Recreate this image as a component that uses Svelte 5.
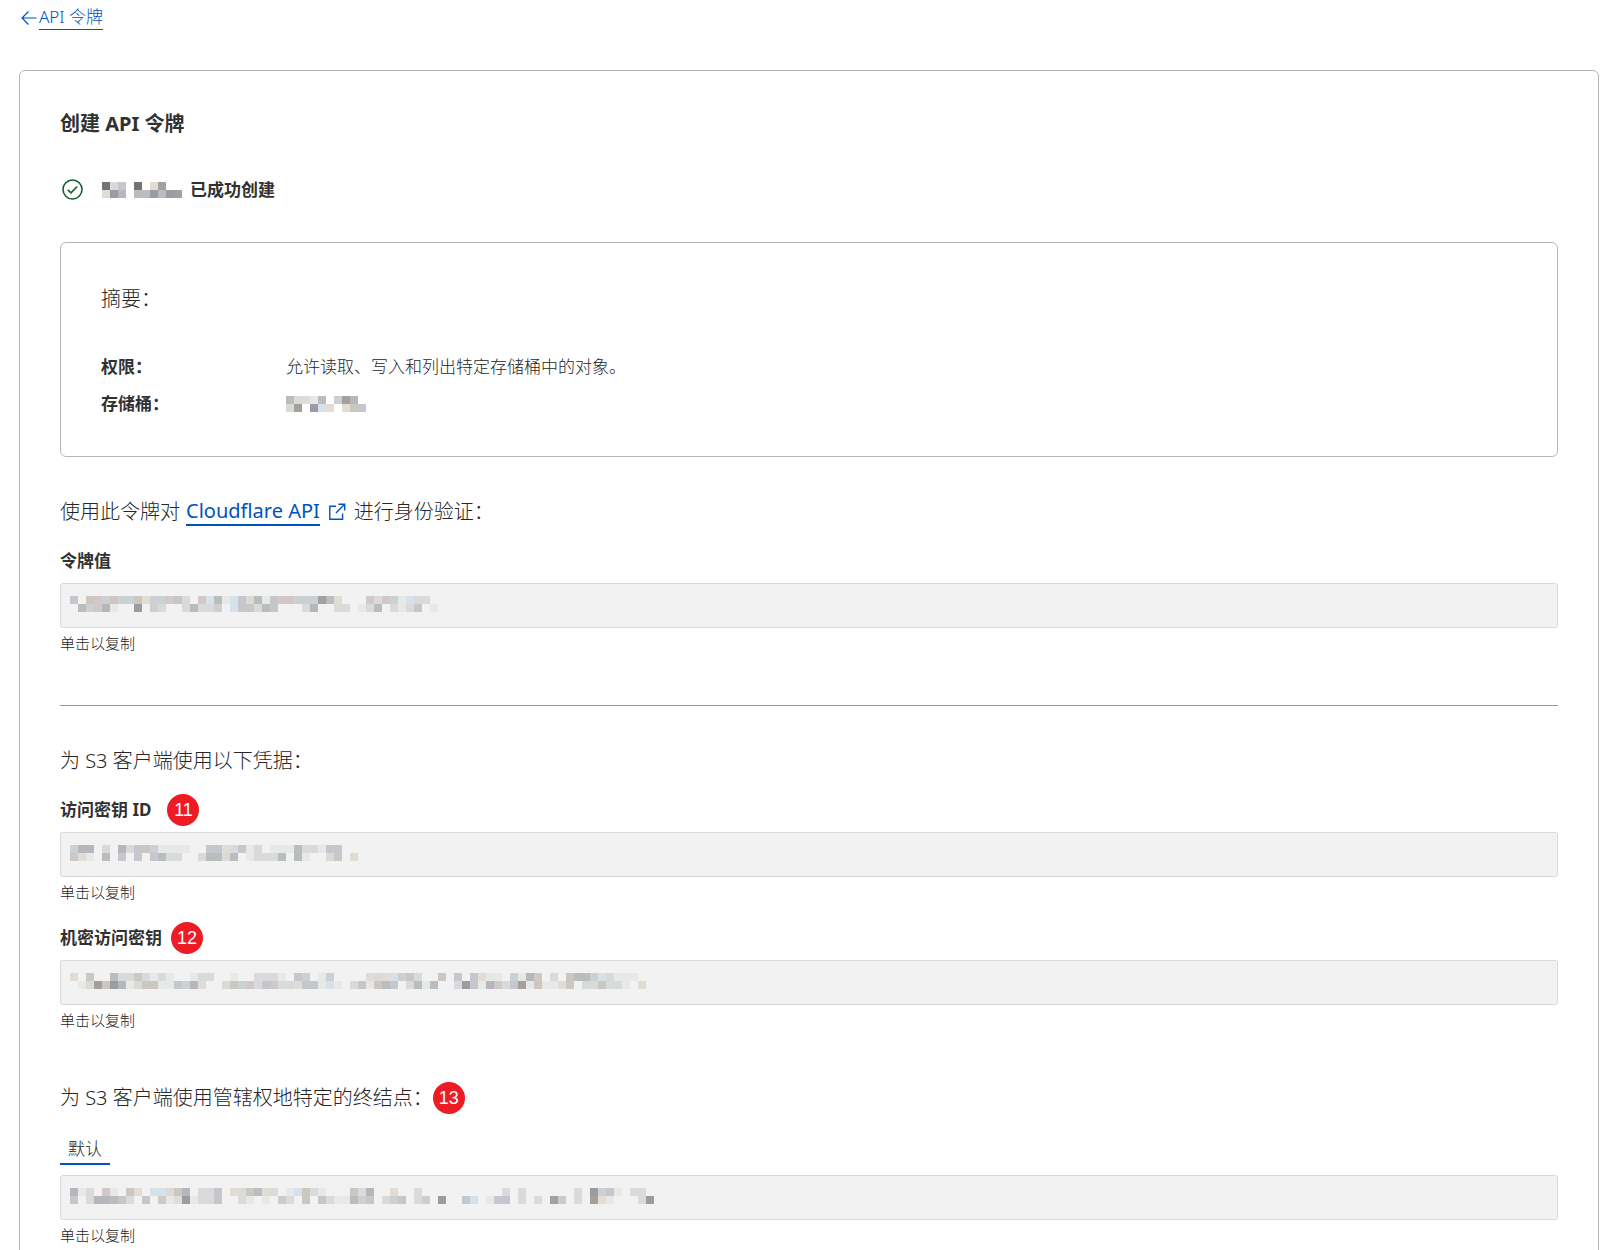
<script lang="ts">
	// shades used by the redaction mosaics
	const shades: Record<string, string> = {
		k: '#757175',
		n: '#a5a09c',
		d: '#999da3',
		q: '#b8b6bd',
		g: '#babdbe',
		m: '#ccc7c0',
		p: '#c5c6ce',
		r: '#d3c8c8',
		t: '#cbd1d2',
		l: '#d9dada',
		w: '#e3dcd5',
		b: '#d7e1e9',
		v: '#e7e8e8'
	};

	const nameMask = ['klp.k.wn...', 'wdq.ggdgdn.'];
	const bucketMask = ['glwvg.tnq.', 'ln.dbw.wmp'];

	const token = {
		id: 'token-value',
		label: '令牌值',
		mask: [
			'p.mrtmttmwttrpl.rbgvbplgvprrtttngw...rlrtvbll.',
			'.gtrqv..d.tl..lgllt.bpmlgp...lq..ll.vlg.lvlp.v'
		]
	};

	const credentials = [
		{
			id: 'access-key-id',
			label: '访问密钥 ID',
			step: 11,
			wide: true,
			mask: ['tqq.l.qlpmtvvvv..ppwlpvl.vvvgllvpp..', 'mwv.g.p.p.pgll..lgglg.vlllg.gv..lm.w']
		},
		{
			id: 'secret-access-key',
			label: '机密访问密钥',
			step: 12,
			wide: false,
			mask: [
				'w.m..gllmlvlv..vll..v..lllv.pt.vt....wlwbtml..m.p.pwvv.tvqr.l.mggtblvvv.',
				'.vlnmdqvlmmvvptqw..lmtrlprllwppvbv.lpvmgp.lgvg..ldpvqrlpnvmvvwm.llmllv.w'
			]
		}
	];

	const endpointMask = [
		'qvl.rv.mw.bblmq.llp.wlmgwl.vbmlv...mlq..w..l..........l.l......l.dtpv.ll.',
		'p.lqqgpl.p.rvwdvllp..lv.v.rl.m.plvvgtm.ltm.lt.d..pb.vpp.l.l.nr.l.nwv...ld'
	];

	function copy(event: MouseEvent) {
		(event.currentTarget as HTMLInputElement).select();
	}
</script>

<svelte:head>
	<title>创建 API 令牌</title>
</svelte:head>

{#snippet mosaic(rows: string[])}
	<svg class="mosaic" width={rows[0].length * 8} height="16" shape-rendering="crispEdges" aria-hidden="true">
		{#each rows as row, y}
			{#each row as cell, x}
				{#if cell !== '.'}
					<rect x={x * 8} y={y * 8} width="8" height="8" fill={shades[cell]} />
				{/if}
			{/each}
		{/each}
	</svg>
{/snippet}

{#snippet copyBox(id: string, mask: string[], name: string | undefined)}
	<div class="copy-box">
		<input {id} type="text" readonly aria-label={name} aria-describedby="{id}-hint" onclick={copy} />
		{@render mosaic(mask)}
	</div>
	<p class="hint" id="{id}-hint">单击以复制</p>
{/snippet}

<main>
	<nav>
		<svg width="16" height="16" viewBox="0 0 16 16" aria-hidden="true">
			<path d="M15.5 8H1M7.5 1.5 1 8l6.5 6.5" fill="none" stroke="currentColor" stroke-width="1.2" />
		</svg>
		<a href="#tokens">API 令牌</a>
	</nav>

	<section class="card">
		<h1>创建 API 令牌</h1>

		<p class="status">
			<svg width="21" height="21" viewBox="0 0 21 21" fill="none" stroke="#195d2e" aria-hidden="true">
				<circle cx="10.5" cy="10.5" r="9.5" stroke-width="1.6" />
				<path d="m5.8 10.8 3.2 3.1 6.2-6.4" stroke-width="1.7" />
			</svg>
			{@render mosaic(nameMask)}
			<strong>已成功创建</strong>
		</p>

		<div class="summary">
			<h2>摘要：</h2>
			<dl>
				<dt>权限：</dt>
				<dd>允许读取、写入和列出特定存储桶中的对象。</dd>
				<dt>存储桶：</dt>
				<dd>{@render mosaic(bucketMask)}</dd>
			</dl>
		</div>

		<h2 class="intro">
			<span>使用此令牌对</span>
			<a href="#cloudflare-api">Cloudflare API</a>
			<svg width="18" height="18" viewBox="0 0 18 18" fill="none" stroke="#0051c3" stroke-width="1.4" aria-hidden="true">
				<path d="M8 3.2H1.8v13H14.6V10.5M10.5 1.2h6.2v6.2M16.5 1.4 8 9.9" />
			</svg>
			<span>进行身份验证：</span>
		</h2>

		<div class="field">
			<div class="label-row"><label for={token.id}>{token.label}</label></div>
			{@render copyBox(token.id, token.mask, undefined)}
		</div>

		<hr />

		<h2>为 S3 客户端使用以下凭据：</h2>
		{#each credentials as item}
			<div class="field">
				<div class="label-row" class:wide={item.wide}>
					<label for={item.id}>{item.label}</label>
					<span class="badge">{item.step}</span>
				</div>
				{@render copyBox(item.id, item.mask, undefined)}
			</div>
		{/each}

		<div class="endpoint">
			<div class="heading-row">
				<h2>为 S3 客户端使用管辖权地特定的终结点：</h2>
				<span class="badge">13</span>
			</div>
			<div class="tabs" role="tablist">
				<button type="button" role="tab" aria-selected="true">默认</button>
			</div>
			{@render copyBox('endpoint', endpointMask, '默认')}
		</div>
	</section>
</main>

<style>
	:global(body) {
		background: #fff;
		color: #262626;
		font-family: 'Noto Sans', 'Noto Sans CJK SC', sans-serif;
		font-size: 17px;
		font-weight: 300;
		line-height: 25px;
	}
	main { padding: 5px 17px 40px 19px; }
	h1, h2, p, dl, dd { margin: 0; }
	h1 { font-size: 20px; line-height: 26px; font-weight: bold; }
	h2 { font-size: 20px; line-height: 30px; font-weight: inherit; }
	strong { font-weight: bold; }
	h1, strong, dt, label { color: #313131; }
	svg { display: block; flex: none; }
	a { color: #0051c3; text-decoration: none; }

	nav {
		display: flex;
		align-items: center;
		height: 25px;
		padding-left: 2px;
		gap: 2px;
		color: #0051c3;
	}
	nav a { border-bottom: 1px solid; line-height: 24px; }

	.card {
		margin-top: 40px;
		padding: 40px;
		border: 1px solid #b6b6b6;
		border-radius: 6px;
	}
	.status {
		display: flex;
		align-items: center;
		margin: 40px 0;
		padding-left: 2px;
	}
	.status .mosaic { margin-left: 19px; }

	.summary {
		padding: 41px 40px 40px;
		border: 1px solid #b6b6b6;
		border-radius: 6px;
	}
	dl {
		display: grid;
		grid-template-columns: 185px 1fr;
		row-gap: 12px;
		align-items: center;
		margin-top: 40px;
	}
	dt { font-weight: bold; }

	.intro {
		display: flex;
		align-items: center;
		gap: 6px;
		margin-top: 40px;
	}
	.intro a { border-bottom: 2px solid; line-height: 26px; font-weight: normal; }
	.intro svg { margin: 0 2px; }

	.field { margin-top: 21px; }
	.field + .field { margin-top: 22px; }
	.label-row {
		display: flex;
		align-items: center;
		gap: 9px;
		height: 25px;
		margin-bottom: 10px;
	}
	.label-row.wide { gap: 16px; }
	label { font-weight: bold; }
	.copy-box { position: relative; }
	.copy-box .mosaic { position: absolute; top: 13px; left: 10px; pointer-events: none; }
	input {
		display: block;
		box-sizing: border-box;
		width: 100%;
		height: 45px;
		padding: 0 10px;
		border: 1px solid #d9d9d9;
		border-radius: 3px;
		background: #f2f2f2;
		font: inherit;
		color: inherit;
		cursor: pointer;
	}
	.hint { margin-top: 4px; font-size: 15px; line-height: 22px; }

	hr {
		margin: 51px 0 40px;
		border: 0;
		border-top: 1px solid #999;
	}

	.badge {
		flex: none;
		width: 32px;
		height: 32px;
		border-radius: 50%;
		background: #ed1c24;
		color: #fff;
		font-family: 'Liberation Sans', sans-serif;
		font-size: 18px;
		font-weight: normal;
		line-height: 32px;
		text-align: center;
	}
	.endpoint { margin-top: 52px; }
	.heading-row { display: flex; align-items: center; height: 30px; }
	.tabs { display: flex; margin: 21px 0 10px; }
	.tabs button {
		height: 31px;
		padding: 0 8px;
		border: 0;
		border-bottom: 2px solid #0051c3;
		background: none;
		font: inherit;
		color: inherit;
		cursor: pointer;
	}
</style>
